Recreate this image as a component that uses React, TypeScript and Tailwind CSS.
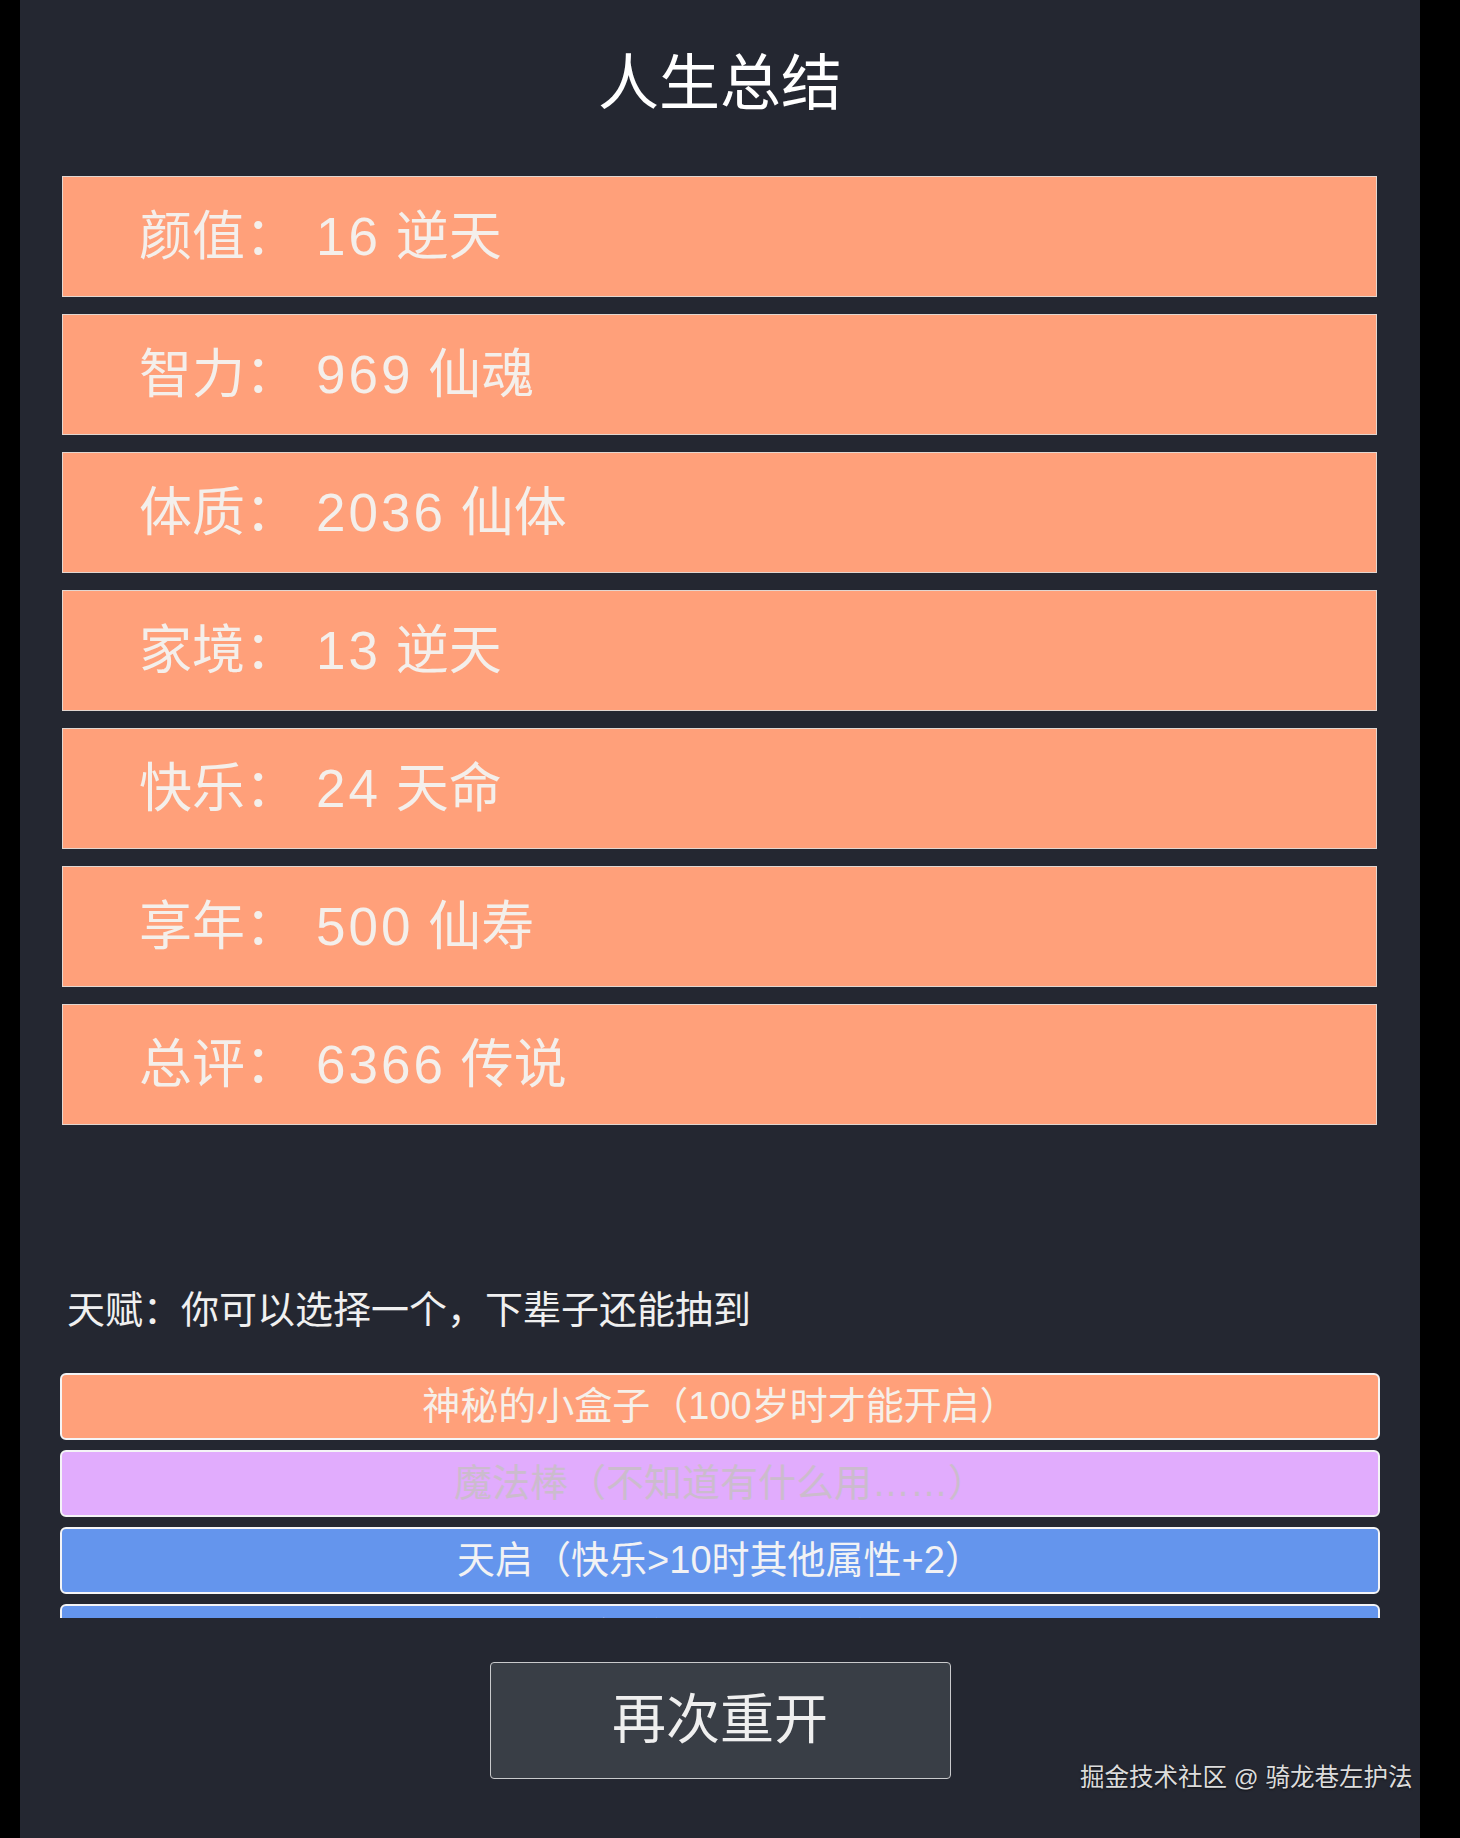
import React from 'react'

const font = { fontFamily: '"Liberation Sans", "Noto Sans CJK SC", sans-serif' }

const stats = [
  { label: '颜值', num: '16', rank: '逆天' },
  { label: '智力', num: '969', rank: '仙魂' },
  { label: '体质', num: '2036', rank: '仙体' },
  { label: '家境', num: '13', rank: '逆天' },
  { label: '快乐', num: '24', rank: '天命' },
  { label: '享年', num: '500', rank: '仙寿' },
  { label: '总评', num: '6366', rank: '传说' },
]

const talents = [
  { name: '神秘的小盒子（100岁时才能开启）', cls: 'bg-[#ffa07a] text-[#f6f0ea]' },
  { name: '魔法棒（不知道有什么用……）', cls: 'bg-[#e1acfd] text-[#cbbccd]' },
  { name: '天启（快乐>10时其他属性+2）', cls: 'bg-[#6495ed] text-[#f2f2f4]' },
  { name: '天命（所有属性+1）', cls: 'bg-[#6495ed] text-[#f2f2f4]' },
]

export default function App() {
  return (
    <div className="min-h-[1838px] bg-black flex" style={font}>
      <div className="relative ml-[20px] w-[1400px] min-h-[1838px] bg-[#242731]">
        {/* Header */}
        <h1 className="pt-[39px] text-center text-[61px] leading-[90px] text-white">人生总结</h1>

        {/* Summary rows */}
        <div className="mt-[47px] ml-[42px] w-[1315px] flex flex-col gap-[17px]">
          {stats.map((s) => (
            <div
              key={s.label}
              className="h-[121px] flex items-center pl-[76px] bg-[#ffa07a] border border-[#e2d6d0] text-[53px] text-[#f4efeb]"
            >
              <span>{s.label}：</span>
              <span className="ml-[18px]">
                <span className="tracking-[3px]">{s.num}</span> {s.rank}
              </span>
            </div>
          ))}
        </div>

        {/* Talents */}
        <p className="mt-[157px] pl-[47px] text-[38px] leading-[57px] text-[#f0f0f0]">
          天赋：你可以选择一个，下辈子还能抽到
        </p>
        <div className="mt-[34px] mx-[40px] h-[245px] overflow-hidden flex flex-col gap-[10px]">
          {talents.map((t) => (
            <div
              key={t.name}
              className={`shrink-0 h-[67px] flex items-center justify-center rounded-[6px] border-2 border-[#f4f4f6] text-[38px] ${t.cls}`}
            >
              {t.name}
            </div>
          ))}
        </div>

        <div className="mt-[44px] flex justify-center">
          <button className="w-[461px] h-[117px] rounded-[4px] border border-[#c9cacc] bg-[#393e46] text-[54px] text-[#efefef]">
            再次重开
          </button>
        </div>

        <span className="absolute left-[1060px] top-[1762px] text-[24.5px] leading-[32px] text-[#dcdcdc] [text-shadow:0_1px_2px_rgba(0,0,0,0.6)]">
          掘金技术社区 @ 骑龙巷左护法
        </span>
      </div>
    </div>
  )
}
